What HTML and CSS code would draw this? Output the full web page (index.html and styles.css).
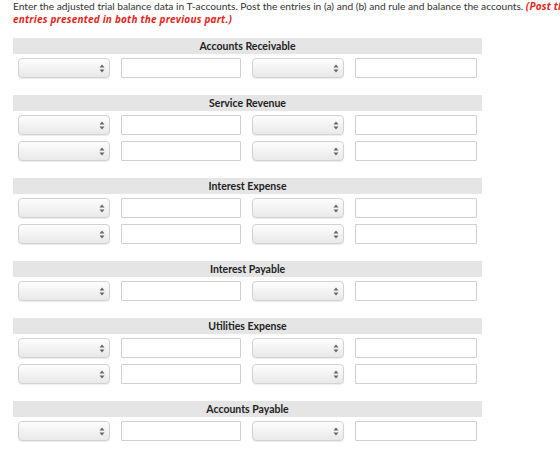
FILE: index.html
```
<!doctype html>
<html>
  <head>
    <meta charset="UTF-8" />
    <link rel="stylesheet" href="styles.css">
  </head>
  <body>
    <p class="instructions">
      Enter the adjusted trial balance data in T-accounts. Post the entries in (a) and (b) and rule and balance the accounts.
      <em class="note">(Post the entries presented in both the previous part.)</em>
    </p>

    <div class="account">
      <div class="account-name">Accounts Receivable</div>
      <div class="row">
        <div class="select"><svg class="arrows" width="6" height="9" viewBox="0 0 6 9"><path d="M3 0.5L5.5 3.5H0.5Z M3 8.5L5.5 5.5H0.5Z" /></svg></div>
        <input class="amount" type="text">
        <div class="select"><svg class="arrows" width="6" height="9" viewBox="0 0 6 9"><path d="M3 0.5L5.5 3.5H0.5Z M3 8.5L5.5 5.5H0.5Z" /></svg></div>
        <input class="amount" type="text">
      </div>
    </div>

    <div class="account">
      <div class="account-name">Service Revenue</div>
      <div class="row">
        <div class="select"><svg class="arrows" width="6" height="9" viewBox="0 0 6 9"><path d="M3 0.5L5.5 3.5H0.5Z M3 8.5L5.5 5.5H0.5Z" /></svg></div>
        <input class="amount" type="text">
        <div class="select"><svg class="arrows" width="6" height="9" viewBox="0 0 6 9"><path d="M3 0.5L5.5 3.5H0.5Z M3 8.5L5.5 5.5H0.5Z" /></svg></div>
        <input class="amount" type="text">
      </div>
      <div class="row">
        <div class="select"><svg class="arrows" width="6" height="9" viewBox="0 0 6 9"><path d="M3 0.5L5.5 3.5H0.5Z M3 8.5L5.5 5.5H0.5Z" /></svg></div>
        <input class="amount" type="text">
        <div class="select"><svg class="arrows" width="6" height="9" viewBox="0 0 6 9"><path d="M3 0.5L5.5 3.5H0.5Z M3 8.5L5.5 5.5H0.5Z" /></svg></div>
        <input class="amount" type="text">
      </div>
    </div>

    <div class="account">
      <div class="account-name">Interest Expense</div>
      <div class="row">
        <div class="select"><svg class="arrows" width="6" height="9" viewBox="0 0 6 9"><path d="M3 0.5L5.5 3.5H0.5Z M3 8.5L5.5 5.5H0.5Z" /></svg></div>
        <input class="amount" type="text">
        <div class="select"><svg class="arrows" width="6" height="9" viewBox="0 0 6 9"><path d="M3 0.5L5.5 3.5H0.5Z M3 8.5L5.5 5.5H0.5Z" /></svg></div>
        <input class="amount" type="text">
      </div>
      <div class="row">
        <div class="select"><svg class="arrows" width="6" height="9" viewBox="0 0 6 9"><path d="M3 0.5L5.5 3.5H0.5Z M3 8.5L5.5 5.5H0.5Z" /></svg></div>
        <input class="amount" type="text">
        <div class="select"><svg class="arrows" width="6" height="9" viewBox="0 0 6 9"><path d="M3 0.5L5.5 3.5H0.5Z M3 8.5L5.5 5.5H0.5Z" /></svg></div>
        <input class="amount" type="text">
      </div>
    </div>

    <div class="account">
      <div class="account-name">Interest Payable</div>
      <div class="row">
        <div class="select"><svg class="arrows" width="6" height="9" viewBox="0 0 6 9"><path d="M3 0.5L5.5 3.5H0.5Z M3 8.5L5.5 5.5H0.5Z" /></svg></div>
        <input class="amount" type="text">
        <div class="select"><svg class="arrows" width="6" height="9" viewBox="0 0 6 9"><path d="M3 0.5L5.5 3.5H0.5Z M3 8.5L5.5 5.5H0.5Z" /></svg></div>
        <input class="amount" type="text">
      </div>
    </div>

    <div class="account">
      <div class="account-name">Utilities Expense</div>
      <div class="row">
        <div class="select"><svg class="arrows" width="6" height="9" viewBox="0 0 6 9"><path d="M3 0.5L5.5 3.5H0.5Z M3 8.5L5.5 5.5H0.5Z" /></svg></div>
        <input class="amount" type="text">
        <div class="select"><svg class="arrows" width="6" height="9" viewBox="0 0 6 9"><path d="M3 0.5L5.5 3.5H0.5Z M3 8.5L5.5 5.5H0.5Z" /></svg></div>
        <input class="amount" type="text">
      </div>
      <div class="row">
        <div class="select"><svg class="arrows" width="6" height="9" viewBox="0 0 6 9"><path d="M3 0.5L5.5 3.5H0.5Z M3 8.5L5.5 5.5H0.5Z" /></svg></div>
        <input class="amount" type="text">
        <div class="select"><svg class="arrows" width="6" height="9" viewBox="0 0 6 9"><path d="M3 0.5L5.5 3.5H0.5Z M3 8.5L5.5 5.5H0.5Z" /></svg></div>
        <input class="amount" type="text">
      </div>
    </div>

    <div class="account">
      <div class="account-name">Accounts Payable</div>
      <div class="row">
        <div class="select"><svg class="arrows" width="6" height="9" viewBox="0 0 6 9"><path d="M3 0.5L5.5 3.5H0.5Z M3 8.5L5.5 5.5H0.5Z" /></svg></div>
        <input class="amount" type="text">
        <div class="select"><svg class="arrows" width="6" height="9" viewBox="0 0 6 9"><path d="M3 0.5L5.5 3.5H0.5Z M3 8.5L5.5 5.5H0.5Z" /></svg></div>
        <input class="amount" type="text">
      </div>
    </div>
  </body>
</html>
```

FILE: styles.css
```
html,
body {
  height: 100%;
}
body {
  background: white;
  color: #333;
  font-family: Lato, "Open Sans", sans-serif;
  margin: 0;
  overflow: hidden;
  padding: 0 13px;
}
.instructions {
  font-size: 10.2px;
  line-height: 13px;
  margin: 0 0 12px;
  width: 580px;
}
.note {
  color: #e5261c;
  font-family: "Open Sans", sans-serif;
  font-size: 10px;
  font-weight: bold;
  letter-spacing: 0.2px;
}
.account {
  display: flex;
  flex-direction: column;
  gap: 6px;
  margin-bottom: 17px;
  width: 469px;
}
.account-name {
  background: #e5e5e5;
  color: #222;
  font-size: 10.5px;
  font-weight: bold;
  height: 16px;
  line-height: 16px;
  margin-bottom: -2px;
  text-align: center;
}
.row {
  display: grid;
  grid-template-columns: 92px 120px 92px 122px;
  column-gap: 11px;
  padding: 0 5px;
}
.select {
  align-items: center;
  background: linear-gradient(#fdfdfd, #e9e9e9);
  border: 1px solid #d2d2d2;
  border-radius: 4px;
  box-shadow: 0 1px 1px rgba(0, 0, 0, 0.08);
  box-sizing: border-box;
  display: flex;
  height: 20px;
  justify-content: flex-end;
  padding-right: 4px;
}
.arrows {
  fill: #666;
}
.amount {
  border: 1px solid #cfcfcf;
  border-radius: 1px;
  box-sizing: border-box;
  height: 20px;
  margin: 0;
  padding: 0 4px;
}
```
